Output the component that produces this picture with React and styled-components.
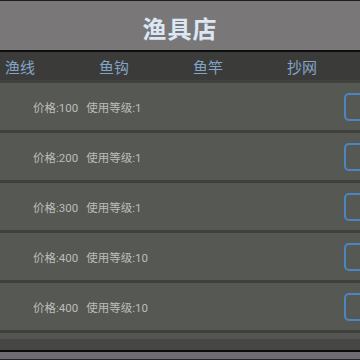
import React from "react";
import styled, { createGlobalStyle } from "styled-components";

const Global = createGlobalStyle`
  html, body { margin: 0; padding: 0; background: #3e3f3c; }
  body { font-family: "Roboto", "Noto Sans CJK SC", sans-serif; overflow: hidden; }
`;

const Screen = styled.div`
  width: 360px;
  height: 360px;
  display: flex;
  flex-direction: column;
  overflow: hidden;
  background: #3e3f3c;
`;

const Header = styled.div`
  height: 49px;
  border-top: 1px solid #1c1e26;
  border-bottom: 2px solid #0e0e0e;
  background: #7a7778;
  display: flex;
  align-items: center;
  justify-content: center;
  flex-shrink: 0;
`;

const Title = styled.h1`
  margin: 0;
  font-family: "Noto Sans CJK SC", sans-serif;
  font-weight: 700;
  font-size: 24px;
  color: #dbe8f4;
  letter-spacing: 1px;
  padding-top: 4px;
`;

const Tabs = styled.div`
  height: 28px;
  background: #3b3c39;
  display: grid;
  grid-template-columns: repeat(4, 94px);
  padding-left: 5px;
  align-items: center;
  flex-shrink: 0;
  border-bottom: 3px solid #42433f;
`;

const Tab = styled.div`
  font-family: "Noto Sans CJK SC", sans-serif;
  font-size: 15px;
  color: #84a3c8;
  white-space: nowrap;
`;

const List = styled.div`
  display: flex;
  flex-direction: column;
  flex-shrink: 0;
`;

const Row = styled.div`
  height: 47px;
  background: #565853;
  border-bottom: 3px solid #40413e;
  display: flex;
  align-items: center;
  justify-content: space-between;
  padding-left: 33px;
`;

const Info = styled.div`
  font-family: "Roboto", "Noto Sans CJK SC", sans-serif;
  font-size: 11.5px;
  color: #bcbcba;
  display: flex;
  gap: 8px;
`;

const BuyButton = styled.div`
  width: 30px;
  height: 28px;
  margin-right: -14px;
  border: 2px solid #4d84c4;
  border-radius: 5px;
  box-sizing: border-box;
  margin-top: 1px;
`;

const Footer = styled.div`
  display: flex;
  flex-direction: column;
  flex-shrink: 0;
`;

const FooterStrip = styled.div`
  height: ${(p) => p.$h}px;
  background: ${(p) => p.$c};
`;

const items = [
  { price: 100, level: 1 },
  { price: 200, level: 1 },
  { price: 300, level: 1 },
  { price: 400, level: 10 },
  { price: 400, level: 10 },
];

export default function App() {
  return (
    <>
      <Global />
      <Screen>
        <Header>
          <Title>渔具店</Title>
        </Header>
        <Tabs>
          <Tab>渔线</Tab>
          <Tab>鱼钩</Tab>
          <Tab>鱼竿</Tab>
          <Tab>抄网</Tab>
        </Tabs>
        <List>
          {items.map((it, i) => (
            <Row key={i}>
              <Info>
                <span>价格:{it.price}</span>
                <span>使用等级:{it.level}</span>
              </Info>
              <BuyButton />
            </Row>
          ))}
        </List>
        <Footer>
          <FooterStrip $h={6} $c="#555652" />
          <FooterStrip $h={11} $c="#464744" />
          <FooterStrip $h={2} $c="#0a0a0a" />
          <FooterStrip $h={7} $c="#6e6c70" />
          <FooterStrip $h={1} $c="#22242c" />
        </Footer>
      </Screen>
    </>
  );
}
